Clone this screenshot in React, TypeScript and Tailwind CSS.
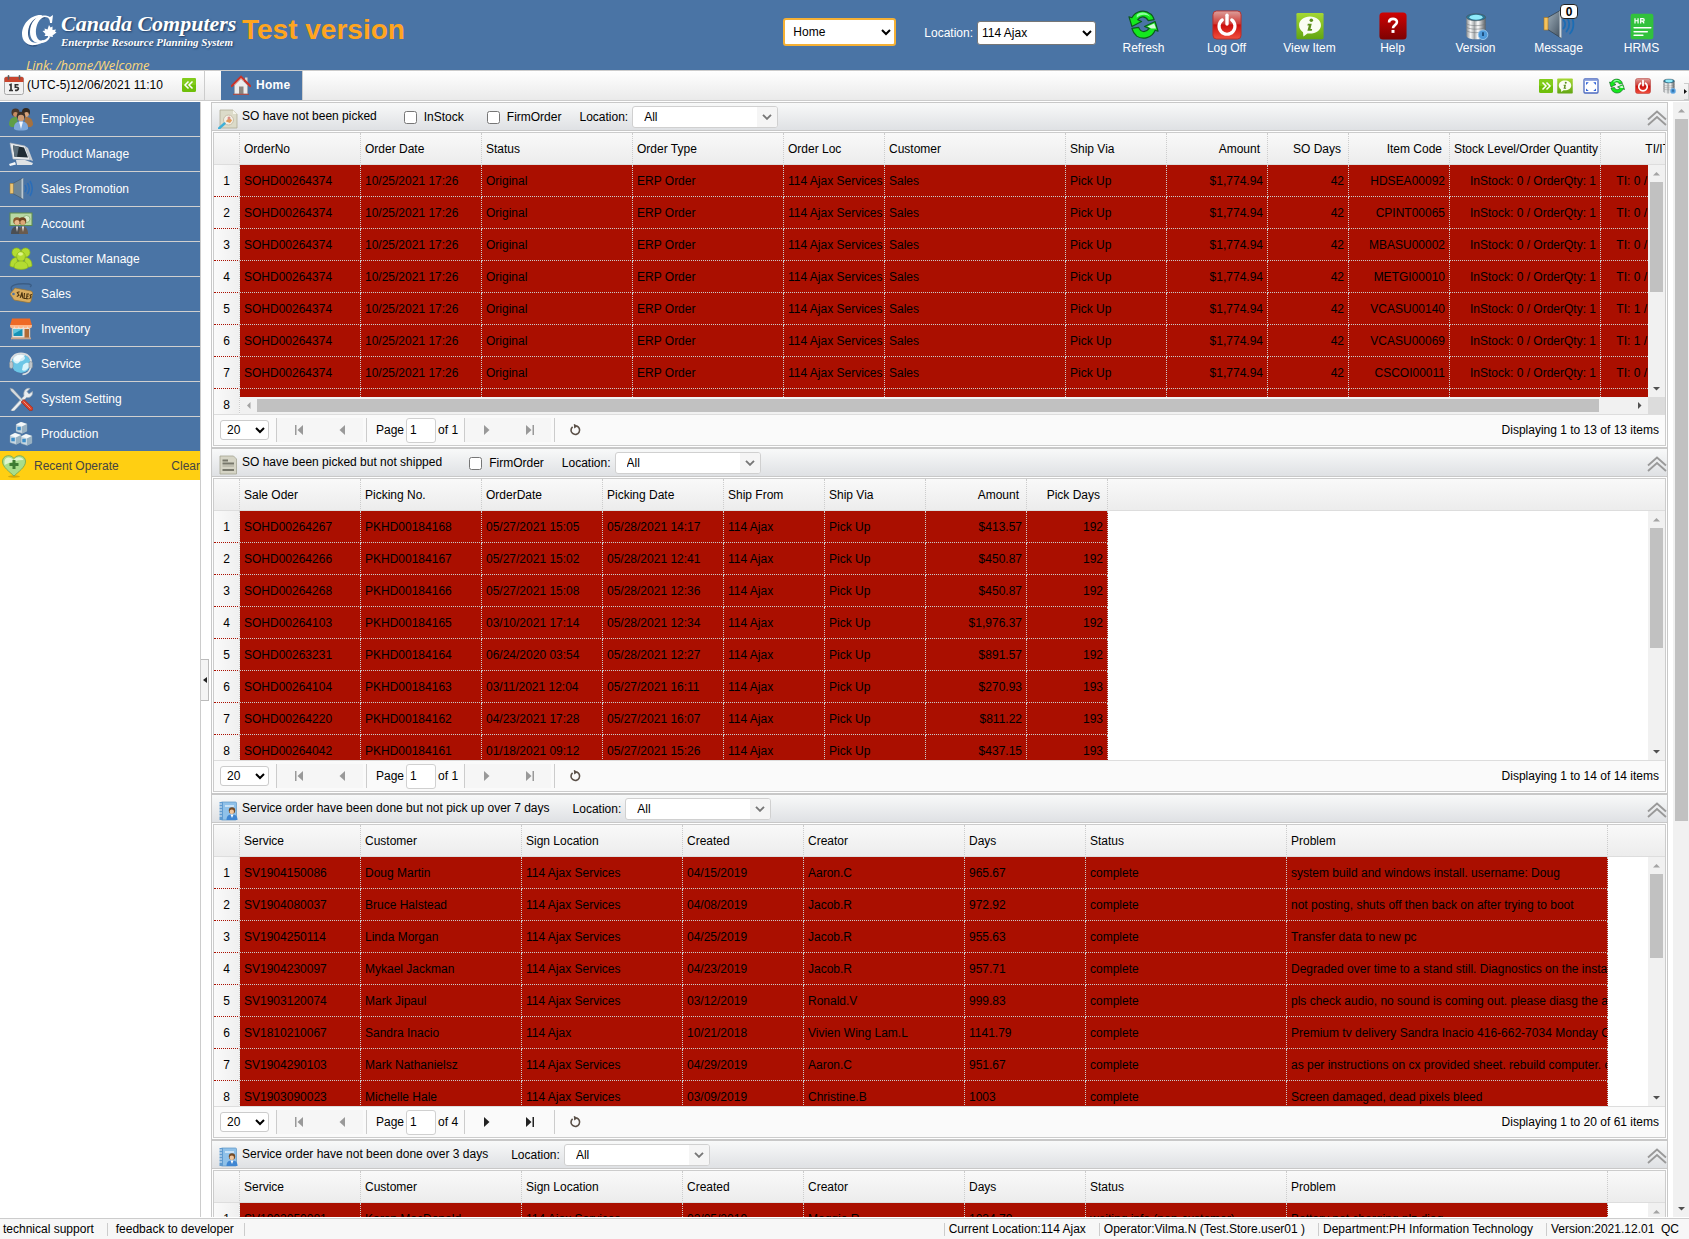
import React, { useId, useState } from "react";

type Column = { label: string; width: number; right?: boolean };
type PanelData = {
  title: string;
  icon: React.ReactNode;
  checks: string[];
  columns: Column[];
  rows: string[][];
  pages: number;
  total: string;
  thumb: number;
  wide?: boolean;
};

/* ---------- small glyph icons ---------- */

function RefreshIcon({ className }: { className: string }) {
  return (
    <svg viewBox="0 0 32 32" className={className} aria-hidden="true">
      <g stroke="#0b5a1c" strokeWidth="1.2" strokeLinejoin="round">
        <path d="M1 8 L4 9 C8 2 17 0 23 5 C25 6 26 8 27 11 L21 12 C18 7 13 7 10 11 L14 13 L4 18 Z" fill="#14e81e" />
        <path d="M31 23 L28 22 C25 30 15 32 9 28 C7 26 5 24 4 20 L11 19 C13 24 18 25 22 20 L17 18 L28 13 Z" fill="#14e81e" />
      </g>
      <path d="M9 6 C13 2 20 3 23 8 C19 5 13 5 9 9 Z" fill="#8dffa0" />
      <path d="M20 18 L27 15 L29 20 L24 20 Z" fill="#e6ffe9" opacity=".9" />
    </svg>
  );
}

function PowerIcon({ className }: { className: string }) {
  const id = useId();
  return (
    <svg viewBox="0 0 32 32" className={className} aria-hidden="true">
      <defs>
        <linearGradient id={id} x1="0" y1="0" x2="0" y2="1">
          <stop offset="0" stopColor="#dda09c" />
          <stop offset=".45" stopColor="#cf3b36" />
          <stop offset=".5" stopColor="#cc0d0b" />
          <stop offset="1" stopColor="#f0503e" />
        </linearGradient>
      </defs>
      <rect x="1" y="1" width="30" height="30" rx="4" fill={`url(#${id})`} stroke="#b3302c" />
      <path d="M11 10.5 A8.5 8.5 0 1 0 21 10.5" fill="none" stroke="#fff" strokeWidth="3.4" strokeLinecap="round" />
      <path d="M16 5.5 V15" stroke="#fff" strokeWidth="3.6" strokeLinecap="round" />
    </svg>
  );
}

function InfoIcon({ className }: { className: string }) {
  const id = useId();
  return (
    <svg viewBox="0 0 32 32" className={className} aria-hidden="true">
      <defs>
        <linearGradient id={id} x1="0" y1="0" x2="0" y2="1">
          <stop offset="0" stopColor="#a5d833" />
          <stop offset="1" stopColor="#62a512" />
        </linearGradient>
      </defs>
      <rect x=".5" y="1" width="31" height="30" rx="1.5" fill={`url(#${id})`} />
      <path d="M16 5 C9 5 3.5 9 3.5 15 C3.5 19 6 21.500 8 23 L8.500 28 L13 24.500 C22 25.500 28.500 21 28.500 15 C28.500 9 23 5 16 5 Z" fill="#fafdf2" />
      <circle cx="17.500" cy="9.500" r="2" fill="#5c8f1c" />
      <path d="M13.500 13.500 H18 L16.500 19.500 H18.500 L18 21.500 H13 L14.700 15.500 H13 Z" fill="#5c8f1c" />
    </svg>
  );
}

function HelpIcon({ className }: { className: string }) {
  const id = useId();
  return (
    <svg viewBox="0 0 32 32" className={className} aria-hidden="true">
      <defs>
        <linearGradient id={id} x1="0" y1="0" x2="0" y2="1">
          <stop offset="0" stopColor="#cf0303" />
          <stop offset="1" stopColor="#7c0202" />
        </linearGradient>
      </defs>
      <rect x=".5" y=".5" width="31" height="31" rx="4" fill={`url(#${id})`} />
      <path d="M11.500 12 C11.500 6.500 20.500 6.500 20.500 11.500 C20.500 15 16 15 16 18.500" fill="none" stroke="#fff" strokeWidth="3" />
      <rect x="14.300" y="20.500" width="3.400" height="3.400" fill="#fff" />
    </svg>
  );
}

function DatabaseIcon({ className }: { className: string }) {
  const id = useId();
  return (
    <svg viewBox="0 0 32 32" className={className} aria-hidden="true">
      <defs>
        <linearGradient id={id} x1="0" y1="0" x2="1" y2="0">
          <stop offset="0" stopColor="#85898c" />
          <stop offset=".22" stopColor="#f8f9f9" />
          <stop offset=".42" stopColor="#a3a7a9" />
          <stop offset=".6" stopColor="#ffffff" />
          <stop offset=".85" stopColor="#909497" />
          <stop offset="1" stopColor="#5d6164" />
        </linearGradient>
      </defs>
      <path d="M5 6 V27 C5 32.500 27 32.500 27 27 V6 Z" fill={`url(#${id})`} />
      <path d="M5 13 C7 16.500 25 16.500 27 13 M5 17 C7 20.500 25 20.500 27 17 M5 21 C7 24.500 25 24.500 27 21" fill="none" stroke="#6f7376" strokeWidth=".6" />
      <ellipse cx="16" cy="6" rx="11" ry="4" fill="#2c7695" stroke="#4b545a" strokeWidth=".7" />
      <ellipse cx="16" cy="6" rx="7.500" ry="2.800" fill="#8feafa" />
      <circle cx="24" cy="26" r="5.500" fill="#4f9bdb" stroke="#9cc9ee" />
      <path d="M24 23 V27.500" stroke="#123e6b" strokeWidth="1.800" />
    </svg>
  );
}

function SpeakerIcon({ className }: { className: string }) {
  const id = useId();
  return (
    <svg viewBox="0 0 32 32" className={className} aria-hidden="true">
      <defs>
        <linearGradient id={id} x1="0" y1="0" x2="1" y2="1">
          <stop offset="0" stopColor="#a3b2bd" />
          <stop offset="1" stopColor="#3f4f5e" />
        </linearGradient>
      </defs>
      <path d="M4 10 L18 2 V30 L4 21 Z" fill={`url(#${id})`} stroke="#33414d" strokeWidth=".8" />
      <path d="M16.500 3 L18.500 2 V30 L16.500 29 Z" fill="#cfd8de" />
      <rect x="1" y="9.500" width="4" height="12.500" fill="#f6c35d" stroke="#a8741d" strokeWidth=".6" />
      <path d="M20.500 12 C22.500 14.500 22.500 18 20.500 20.500 M23.500 9 C27 13.500 27 19 23.500 23.500 M27 7 C31.500 12 31.500 20.500 27 25.500" fill="none" stroke="#1b6db5" strokeWidth="1.800" strokeLinecap="round" />
    </svg>
  );
}

function HrIcon({ className }: { className: string }) {
  return (
    <svg viewBox="0 0 32 32" className={className} aria-hidden="true">
      <rect x="3" y="2" width="26" height="29" rx="2.500" fill="#31c13c" />
      <path d="M8 7 V13 M11.500 7 V13 M8 10 H11.500 M14.500 13 V7.500 H17 C19 7.500 19 10.500 17 10.500 H15 M16.500 10.500 L18.500 13" fill="none" stroke="#fff" strokeWidth="1.400" />
      <path d="M7 18 H26 M7 22.500 H22 M7 26.500 H17" stroke="#fff" strokeWidth="1.800" strokeLinecap="round" />
    </svg>
  );
}

function DoubleChevron({ flip }: { flip?: boolean }) {
  return (
    <svg viewBox="0 0 14 14" className="size-3.5" aria-hidden="true">
      <rect width="14" height="14" rx="1.500" fill="#6fbf0a" />
      <rect width="14" height="7" rx="1.500" fill="#82cc1c" />
      <path d={flip ? "M3.500 3.500 L7 7 L3.500 10.500 M7.500 3.500 L11 7 L7.500 10.500" : "M6.500 3.500 L3 7 L6.500 10.500 M10.500 3.500 L7 7 L10.500 10.500"} fill="none" stroke="#fff" strokeWidth="1.500" />
    </svg>
  );
}

function ExpandIcon({ className }: { className: string }) {
  return (
    <svg viewBox="0 0 16 16" className={className} aria-hidden="true">
      <rect x="1" y="1" width="14" height="14" rx="1" fill="#fff" stroke="#4c6ac0" strokeWidth="1.300" />
      <path d="M1 2.200 H15" stroke="#8ba1de" strokeWidth="1.400" />
      <path d="M3 7 V4.200 H5.800 Z M13 7 V4.200 H10.200 Z M3 10.500 V13 H5.800 Z M13 10.500 V13 H10.200 Z" fill="#2f62d8" />
    </svg>
  );
}

function CalendarIcon() {
  return (
    <svg viewBox="0 0 20 20" className="size-5" aria-hidden="true">
      <rect x=".5" y="2" width="19" height="17.500" rx="2" fill="#f1f1f1" stroke="#a9a9a9" />
      <path d="M.5 7 V3.500 Q.5 2 2 2 H18 Q19.500 2 19.500 3.500 V7 Z" fill="#c9452d" />
      <path d="M4.500 .8 V4 M15.500 .8 V4" stroke="#5b5b5b" strokeWidth="1.600" strokeLinecap="round" />
      <path d="M5.300 10 L7 9.500 V15.500 M5 15.500 H9" fill="none" stroke="#333" strokeWidth="1.700" />
      <path d="M14.500 9.800 H11.300 V12.300 C15.500 11.500 15.500 15.800 11 15.300" fill="none" stroke="#333" strokeWidth="1.600" />
    </svg>
  );
}

function HouseIcon() {
  return (
    <svg viewBox="0 0 20 20" className="size-5" aria-hidden="true">
      <rect x="14" y="2.500" width="2.500" height="5" fill="#d9d4d0" />
      <path d="M3.500 10 L10 3.500 L16.500 10 V19 H3.500 Z" fill="#ececec" stroke="#a7a7a7" strokeWidth=".7" />
      <path d="M.8 11 L10 1.800 L19.200 11" fill="none" stroke="#c9332a" strokeWidth="2.200" strokeLinecap="round" />
      <path d="M3 10 L10 3.200 L13 6" fill="none" stroke="#f08a80" strokeWidth=".8" />
      <rect x="8" y="11.500" width="4.500" height="7.500" fill="#8b8580" />
      <path d="M2 19.300 H18" stroke="#b84236" strokeWidth="1" />
    </svg>
  );
}

function BrandMark() {
  return (
    <svg viewBox="0 0 36 34" className="h-[34px] w-9" aria-hidden="true">
      <g transform="translate(1 1.500)" fill="#1d3a66" opacity=".55">
        <path d="M22 1 C10 -1 0 9 0 20 C0 28 6 32 13 31 L16 29 C9 29 6 25 6 19 C6 10 13 3 22 3 Z" />
      </g>
      <path d="M20 1 C9 0 0 10 0 20 C0 28 6 32 13 31 C17 30.500 20 29 22 27 L21 26 C17 29 13 29.500 10 28 C3 24 5 4 19 3 Z" fill="#fff" />
      <path d="M31 1 L28 3 C17 -2 8 7 8 18 C8 27 14 30 20 29 C24 28.500 27 26 28 23 L27 22 C24 26 20 27.500 17 26 C11 22 14 4 23 3 C27 3 28 6 28 9 L30 9 Z" fill="#fff" />
      <path d="M27 11 L28.500 13.500 L30.500 12.500 L30.500 16 L34 15.500 L33 17.500 L34.500 18.500 L30.500 21.500 L31 23 L27 22.500 L26.500 25 L26 22 L22.500 22 L23.500 20 L20.500 17 L23 16.500 L22.500 14.500 L25.500 15.500 Z" fill="#fff" />
    </svg>
  );
}

/* ---------- side menu icons ---------- */

const menuIcons: Record<string, React.ReactNode> = {
  Employee: (
    <>
      <circle cx="6.500" cy="5.500" r="4" fill="#4a372b" /><circle cx="17" cy="5" r="4" fill="#33281f" />
      <path d="M0 18 C0 11 4 9.500 8 10 L9 20 H2 Z" fill="#5f9e48" />
      <path d="M24 18 C24 11 20 9.500 16 10 L15 20 H22 Z" fill="#a5713f" />
      <circle cx="6.500" cy="7.500" r="2.400" fill="#c88e63" /><circle cx="17.500" cy="7.500" r="2.400" fill="#d8a47b" />
      <circle cx="12" cy="9" r="4.300" fill="#3a3029" /><circle cx="12" cy="11" r="3.200" fill="#cf9b73" />
      <path d="M5 22 C4.500 16 8 14.500 12 14.500 C16 14.500 19.500 16 19 22 C17 24 7 24 5 22 Z" fill="#7ea8db" />
      <path d="M10 14.500 L12 22 L14 14.500 Z" fill="#f2f6fb" />
    </>
  ),
  "Product Manage": (
    <>
      <path d="M1 1 L16 4 L21 18 L4 17 Z" fill="#e7eaec" stroke="#b3b9bd" strokeWidth=".6" />
      <path d="M4 3.500 L15 5.500 L19 15.500 L5.500 14.800 Z" fill="#1f2b33" />
      <path d="M4 3.500 L10 4.600 L8 15 L5.500 14.800 Z" fill="#5c6e7a" />
      <path d="M16 4 L19 6 L24 19 L21 18 Z" fill="#c8cdd1" />
      <path d="M7 18 L16 18 L24 21 L23 23 H8 Z" fill="#dfe3e6" />
      <path d="M0 22 L6 20 L7 22.500 L1 24 Z" fill="#f4f6f7" />
    </>
  ),
  "Sales Promotion": (
    <>
      <path d="M3 7 L14 1 V22 L3 16 Z" fill="#6e8596" stroke="#3c4d5a" strokeWidth=".5" />
      <path d="M12.500 2 L14.300 1 V22 L12.500 21 Z" fill="#b9c7d1" />
      <rect x="1" y="6.500" width="3.200" height="10" fill="#edc675" stroke="#a17a33" strokeWidth=".5" />
      <path d="M16 8 Q18 11.500 16 15 M18.500 6 Q22 11.500 18.500 17 M21 4 Q25.500 11.500 21 19" fill="none" stroke="#2a6db8" strokeWidth="1.500" />
    </>
  ),
  Account: (
    <>
      <rect x="1" y="1" width="22" height="12.500" fill="#b8d8a3" stroke="#5e8c4d" />
      <circle cx="17.500" cy="7" r="3.500" fill="#dbecc9" stroke="#7ba868" strokeWidth=".7" />
      <circle cx="8" cy="9" r="3.800" fill="#8b5a2c" /><circle cx="13.500" cy="9" r="3.800" fill="#6d4420" />
      <circle cx="8" cy="10.500" r="2.500" fill="#e6b98c" /><circle cx="13.800" cy="10.500" r="2.500" fill="#dba877" />
      <path d="M2 22 C2 16 5 14.500 8 14.500 C11 14.500 12 16 12 22 Z" fill="#4b4f54" />
      <path d="M10 22 C10 16 12 14.500 14 14.500 C17 14.500 19 17 19 22 Z" fill="#6a5b4e" />
      <path d="M7 14.500 L8 20 L9 14.500 Z M13 14.500 L14 20 L15 14.500 Z" fill="#f3f3f3" />
    </>
  ),
  "Customer Manage": (
    <>
      <g fill="#b4dc32" stroke="#8bb51b" strokeWidth=".7">
        <circle cx="7.500" cy="5.500" r="4.500" /><circle cx="16.500" cy="5.500" r="4.500" />
        <path d="M1 19 C1 13 4 10.500 8 10.500 L9 20 H3 Z" /><path d="M23 19 C23 13 20 10.500 16 10.500 L15 20 H21 Z" />
        <ellipse cx="12" cy="9.500" rx="4.300" ry="5" />
        <path d="M5 20.500 C5 16 8 14 12 14 C16 14 19 16 19 20.500 C17 23 7 23 5 20.500 Z" />
      </g>
      <ellipse cx="11.500" cy="7" rx="2.500" ry="1.800" fill="#dff48a" />
    </>
  ),
  Sales: (
    <>
      <path d="M3 9 C-1 3 8 1 20 2 Q24 3 21 5" fill="none" stroke="#3b5d85" strokeWidth="1.300" />
      <path d="M1 12 L6 6 L22 9 Q24 9.500 23.500 12 L22 19 Q21.500 21 19 20.500 L5 18 Z" fill="#d9ac5e" stroke="#9a7431" strokeWidth=".7" />
      <circle cx="4.500" cy="12" r="1.300" fill="#4a74a5" />
      <path d="M10.500 9.800 L8.300 10.500 L10 13.300 L7.800 14.500 M11.200 15.800 L13 10.300 L13.800 16.200 M11.700 14 H13.800 M15.500 11 L15 16.500 H17 M20 12 H18 L17.600 16.800 H19.600 M17.800 14.300 H19.500 M23 12.500 L21 13 L22 15 L20.500 16.800" fill="none" stroke="#4b3410" strokeWidth="1.100" />
    </>
  ),
  Inventory: (
    <>
      <rect x="3" y="8" width="18" height="13" fill="#e9e2db" stroke="#a89b90" strokeWidth=".7" />
      <path d="M3 1.500 H21 L23 8.500 H1 Z" fill="#ee6a26" />
      <path d="M1 8 H23 V9 A2.200 2.200 0 0 1 18.600 9 A2.200 2.200 0 0 1 14.200 9 A2.200 2.200 0 0 1 9.800 9 A2.200 2.200 0 0 1 5.400 9 A2.200 2.200 0 0 1 1 9 Z" fill="#ffb98a" />
      <rect x="4.500" y="12" width="9" height="7" fill="#1592b6" /><path d="M4.500 12 H13.500 L4.500 17 Z" fill="#5fc6de" />
      <rect x="15.500" y="12" width="4.500" height="9" fill="#b06a34" />
      <rect x="2" y="20.500" width="20" height="1.800" fill="#c9a58a" />
    </>
  ),
  Service: (
    <>
      <circle cx="12" cy="11.500" r="9.500" fill="#6cc6e6" />
      <path d="M4 8 C6 3 12 1 16 3 C14 6 11 6 11 9 C9 13 5 12 4 8 Z M14 13 C18 9 21 11 21 13 C19 18 15 20 13 18 Z" fill="#d9f4fb" />
      <ellipse cx="10" cy="6" rx="6" ry="3.500" fill="#fff" opacity=".7" />
      <path d="M2 12 C0 -2 24 -2 22 12" fill="none" stroke="#d8dbdd" strokeWidth="2" />
      <rect x=".5" y="9.500" width="3.500" height="7" rx="1.700" fill="#bfc5c9" stroke="#7b858c" strokeWidth=".5" />
      <rect x="20" y="9.500" width="3.500" height="7" rx="1.700" fill="#bfc5c9" stroke="#7b858c" strokeWidth=".5" />
      <path d="M21.500 16 Q20 22 13.500 22.500" fill="none" stroke="#dcdfe1" strokeWidth="1.600" />
    </>
  ),
  "System Setting": (
    <>
      <path d="M3 22 L15 9 C14 4 17 .5 21 1.500 L18 4.500 L20 7 L23.500 4.500 C24 9 21 11 17.500 10.500 L5.500 23.500 C3 25 1 23.500 3 22 Z" fill="#e9edf0" stroke="#9fa9b1" strokeWidth=".7" />
      <path d="M1 1 L4 2 L14 13 L12.500 14.500 L2 4 Z" fill="#d5dade" stroke="#8e979e" strokeWidth=".5" />
      <path d="M12 15 L15 12.500 L23.500 20.500 C25 23 22.500 24.500 20.500 23.500 Z" fill="#d6412c" stroke="#982a1b" strokeWidth=".6" />
      <path d="M14.500 14.500 L21.500 21.500" stroke="#f29482" strokeWidth="1" />
    </>
  ),
  Production: (
    <>
      {[[7, 0], [1, 11], [12, 12]].map(([x, y]) => (
        <g key={`${x}-${y}`} transform={`translate(${x} ${y})`}>
          <path d="M0 2.500 L5 0 L11 2 V9 L6 11.500 L0 9.500 Z" fill="#c9d8e2" stroke="#7f97a8" strokeWidth=".5" />
          <path d="M0 2.500 L5 0 L11 2 L6 4.500 Z" fill="#f4f8fa" />
          <path d="M6 4.500 L11 2 V9 L6 11.500 Z" fill="#98b1c2" />
          <rect x="1.300" y="4.800" width="3.500" height="3.500" fill="#3d8ec9" />
        </g>
      ))}
    </>
  ),
};

const menuItems = ["Employee", "Product Manage", "Sales Promotion", "Account", "Customer Manage", "Sales", "Inventory", "Service", "System Setting", "Production"];

function HeartIcon() {
  return (
    <svg viewBox="0 0 24 24" className="size-6" aria-hidden="true">
      <ellipse cx="12" cy="22.500" rx="6" ry="1.200" fill="#b98f00" opacity=".6" />
      <path d="M12 22 C8 18 0 13 .5 7 C1 1 9 0 12 4.500 C15 0 23 1 23.500 7 C24 13 16 18 12 22 Z" fill="#a9dd8b" stroke="#6ca356" strokeWidth=".8" />
      <path d="M2.500 7 C3 3 8 2 11.500 6 C15 2 20 3 21.500 6 C15 6 8 8 2.500 11 Z" fill="#dff5cf" />
      <path d="M12 6 V15 M7.500 10.500 H16.500" stroke="#3f7c33" strokeWidth="3" />
    </svg>
  );
}

/* ---------- panel icons ---------- */

const searchDocIcon = (
  <svg viewBox="0 0 20 20" className="size-5" aria-hidden="true">
    <path d="M2 1 H15 L19 5 V19 H2 Z" fill="#dcdbc9" stroke="#aeac98" strokeWidth=".8" />
    <path d="M15 1 V5 H19 Z" fill="#f5f4ea" />
    <circle cx="10.500" cy="11" r="5" fill="#f3efe6" stroke="#c7bfa9" />
    <path d="M8 12.500 C9 9 13 9 14 11.500 L12 14 Z" fill="#e39a5b" />
    <circle cx="11" cy="9" r="1.500" fill="#d98d84" />
    <path d="M6.500 14.500 L1 19.500" stroke="#3fb0d8" strokeWidth="2.400" strokeLinecap="round" />
  </svg>
);
const docIcon = (
  <svg viewBox="0 0 20 20" className="size-5" aria-hidden="true">
    <path d="M2 1 H15.500 L18.500 4 V19 H2 Z" fill="#d5d4c5" stroke="#a5a493" strokeWidth=".8" />
    <path d="M4.500 5.500 H10 M4.500 8.500 H16 M4.500 15 H16" stroke="#77776b" strokeWidth="1.900" />
    <path d="M4.500 11 H16" stroke="#a7a697" strokeWidth="1" />
  </svg>
);
const contactIcon = (
  <svg viewBox="0 0 20 20" className="size-5" aria-hidden="true">
    <rect x="3" y="1" width="15.500" height="18" rx="1" fill="#8fc1e9" stroke="#5d95c4" strokeWidth=".7" />
    <rect x="1.500" y="1" width="3.500" height="18" fill="#5f9bd0" />
    <path d="M.8 3 H4 M.8 6 H4 M.8 9 H4 M.8 12 H4 M.8 15 H4" stroke="#e5eff7" strokeWidth="1.100" />
    <rect x="7" y="4" width="9" height="2" fill="#c9e2f6" />
    <circle cx="14" cy="9.500" r="3.200" fill="#754a24" /><circle cx="13.800" cy="10.800" r="2.200" fill="#f1c69d" />
    <path d="M8.500 19 C8.500 14.500 11 13.500 14 13.500 C17 13.500 19.500 14.500 19.500 19 Z" fill="#3f86d2" />
    <path d="M12.500 13.500 L14 17 L15.500 13.500 Z" fill="#fff" />
  </svg>
);

/* ---------- data ---------- */

const so = (code: string, ti: string) => ["SOHD00264374", "10/25/2021 17:26", "Original", "ERP Order", "114 Ajax Services", "Sales", "Pick Up", "$1,774.94", "42", code, "InStock: 0 / OrderQty: 1", `TI: ${ti} / IT: 0`];
const pick = (order: string, no: string, od: string, pd: string, amount: string, days: string) => [order, no, od, pd, "114 Ajax", "Pick Up", amount, days];

const serviceColumns: Column[] = [
  { label: "Service", width: 121 }, { label: "Customer", width: 161 }, { label: "Sign Location", width: 161 },
  { label: "Created", width: 121 }, { label: "Creator", width: 161 }, { label: "Days", width: 121 },
  { label: "Status", width: 201 }, { label: "Problem", width: 321 },
];

const panels: PanelData[] = [
  {
    title: "SO have not been picked", icon: searchDocIcon, checks: ["InStock", "FirmOrder"], pages: 1,
    total: "Displaying 1 to 13 of 13 items", thumb: 110, wide: true,
    columns: [
      { label: "OrderNo", width: 121 }, { label: "Order Date", width: 121 }, { label: "Status", width: 151 },
      { label: "Order Type", width: 151 }, { label: "Order Loc", width: 101 }, { label: "Customer", width: 181 },
      { label: "Ship Via", width: 101 }, { label: "Amount", width: 101, right: true }, { label: "SO Days", width: 81, right: true },
      { label: "Item Code", width: 101, right: true }, { label: "Stock Level/Order Quantity", width: 151, right: true },
      { label: "TI/IT", width: 77, right: true },
    ],
    rows: [so("HDSEA00092", "0"), so("CPINT00065", "0"), so("MBASU00002", "0"), so("METGI00010", "0"), so("VCASU00140", "1"), so("VCASU00069", "1"), so("CSCOI00011", "0"), so("", "0")],
  },
  {
    title: "SO have been picked but not shipped", icon: docIcon, checks: ["FirmOrder"], pages: 1,
    total: "Displaying 1 to 14 of 14 items", thumb: 120,
    columns: [
      { label: "Sale Oder", width: 121 }, { label: "Picking No.", width: 121 }, { label: "OrderDate", width: 121 },
      { label: "Picking Date", width: 121 }, { label: "Ship From", width: 101 }, { label: "Ship Via", width: 101 },
      { label: "Amount", width: 101, right: true }, { label: "Pick Days", width: 81, right: true },
    ],
    rows: [
      pick("SOHD00264267", "PKHD00184168", "05/27/2021 15:05", "05/28/2021 14:17", "$413.57", "192"),
      pick("SOHD00264266", "PKHD00184167", "05/27/2021 15:02", "05/28/2021 12:41", "$450.87", "192"),
      pick("SOHD00264268", "PKHD00184166", "05/27/2021 15:08", "05/28/2021 12:36", "$450.87", "192"),
      pick("SOHD00264103", "PKHD00184165", "03/10/2021 17:14", "05/28/2021 12:34", "$1,976.37", "192"),
      pick("SOHD00263231", "PKHD00184164", "06/24/2020 03:54", "05/28/2021 12:27", "$891.57", "192"),
      pick("SOHD00264104", "PKHD00184163", "03/11/2021 12:04", "05/27/2021 16:11", "$270.93", "193"),
      pick("SOHD00264220", "PKHD00184162", "04/23/2021 17:28", "05/27/2021 16:07", "$811.22", "193"),
      pick("SOHD00264042", "PKHD00184161", "01/18/2021 09:12", "05/27/2021 15:26", "$437.15", "193"),
    ],
  },
  {
    title: "Service order have been done but not pick up over 7 days", icon: contactIcon, checks: [], pages: 4,
    total: "Displaying 1 to 20 of 61 items", thumb: 84, columns: serviceColumns,
    rows: [
      ["SV1904150086", "Doug Martin", "114 Ajax Services", "04/15/2019", "Aaron.C", "965.67", "complete", "system build and windows install. username: Doug"],
      ["SV1904080037", "Bruce Halstead", "114 Ajax Services", "04/08/2019", "Jacob.R", "972.92", "complete", "not posting, shuts off then back on after trying to boot"],
      ["SV1904250114", "Linda Morgan", "114 Ajax Services", "04/25/2019", "Jacob.R", "955.63", "complete", "Transfer data to new pc"],
      ["SV1904230097", "Mykael Jackman", "114 Ajax Services", "04/23/2019", "Jacob.R", "957.71", "complete", "Degraded over time to a stand still. Diagnostics on the installed"],
      ["SV1903120074", "Mark Jipaul", "114 Ajax Services", "03/12/2019", "Ronald.V", "999.83", "complete", "pls check audio, no sound is coming out. please diasg the audio"],
      ["SV1810210067", "Sandra Inacio", "114 Ajax", "10/21/2018", "Vivien Wing Lam.L", "1141.79", "complete", "Premium tv delivery Sandra Inacio 416-662-7034 Monday Oct"],
      ["SV1904290103", "Mark Nathanielsz", "114 Ajax Services", "04/29/2019", "Aaron.C", "951.67", "complete", "as per instructions on cx provided sheet. rebuild computer. cx"],
      ["SV1903090023", "Michelle Hale", "114 Ajax Services", "03/09/2019", "Christine.B", "1003", "complete", "Screen damaged, dead pixels bleed"],
    ],
  },
  {
    title: "Service order have not been done over 3 days", icon: contactIcon, checks: [], pages: 4,
    total: "Displaying 1 to 20 of 61 items", thumb: 84, columns: serviceColumns,
    rows: [["SV1902050081", "Karen MacDonald", "114 Ajax Services", "02/05/2019", "Maggie.R", "1034.79", "waiting info (non-customer)", "Battery not charging plz diag"]],
  },
];

/* ---------- building blocks ---------- */

function Arrow({ dir, dim }: { dir: "up" | "down" | "left" | "right"; dim?: boolean }) {
  const paths = { up: "M0 5.500 L3.500 2 L7 5.500 Z", down: "M0 2 H7 L3.500 5.500 Z", left: "M5.500 0 V7 L2 3.500 Z", right: "M2 0 V7 L5.500 3.500 Z" };
  return (
    <svg viewBox="0 0 7 7" className="size-[7px]" aria-hidden="true">
      <path d={paths[dir]} fill={dim ? "#a3a3a3" : "#505050"} />
    </svg>
  );
}

function VerticalBar({ children }: { children: React.ReactNode }) {
  return (
    <>
      <div className="flex h-[17px] shrink-0 items-center justify-center"><Arrow dir="up" dim /></div>
      {children}
      <div className="mt-auto flex h-[17px] shrink-0 items-center justify-center"><Arrow dir="down" /></div>
    </>
  );
}

function LocationSelect({ id }: { id: string }) {
  return (
    <div className="relative h-[22px] w-[146px] overflow-hidden rounded-[3px] border border-[#d0d0d0] bg-white">
      <select id={id} className="h-full w-full appearance-none pl-[11px] text-xs text-black outline-none">
        <option>All</option>
      </select>
      <span className="pointer-events-none absolute inset-y-0 right-0 flex w-5 items-center justify-center bg-[#f5f5f5]">
        <svg viewBox="0 0 10 6" className="h-1.5 w-2.5" aria-hidden="true">
          <path d="M1 .8 L5 4.800 L9 .8" fill="none" stroke="#777" strokeWidth="1.900" />
        </svg>
      </span>
    </div>
  );
}

function PageButton({ label, path, active }: { label: string; path: string; active?: boolean }) {
  return (
    <button type="button" aria-label={label} className={active ? "flex h-6 w-[43px] items-center justify-center text-[#222]" : "flex h-6 w-[43px] items-center justify-center bg-[#f6f6f6] text-[#999]"}>
      <svg viewBox="0 0 10 12" className="h-3 w-2.5" aria-hidden="true"><path d={path} fill="currentColor" /></svg>
    </button>
  );
}

function Pager({ pages, total }: { pages: number; total: string }) {
  const more = pages > 1;
  const divider = <span className="h-6 w-px bg-[#ccc]" />;
  return (
    <div className="flex h-[31px] items-center border-t border-[#ddd] bg-[#fafafa] pr-1.5 pl-1.5 text-xs">
      <select aria-label="Rows per page" className="mr-[7px] h-5 w-[49px] rounded-[3px] border border-[#ccc] bg-white pl-0.5">
        <option>20</option>
      </select>
      {divider}
      <PageButton label="First page" path="M1 1 H2.500 V11 H1 Z M9 1 V11 L3.500 6 Z" />
      <PageButton label="Previous page" path="M8 1 V11 L2.500 6 Z" />
      <span className="ml-[3px] h-6 w-px bg-[#ccc]" />
      <label className="ml-[9px] flex items-center gap-0.5">
        Page
        <input defaultValue="1" className="h-[25px] w-[30px] rounded-[3px] border border-[#d0d0d0] bg-white px-[3px]" />
      </label>
      <span className="ml-0.5 w-[26px]">of {pages}</span>
      {divider}
      <PageButton label="Next page" path="M2 1 V11 L7.500 6 Z" active={more} />
      <PageButton label="Last page" path="M1 1 V11 L6.500 6 Z M7.500 1 H9 V11 H7.500 Z" active={more} />
      <span className="ml-[3px] h-6 w-px bg-[#ccc]" />
      <button type="button" aria-label="Reload" className="flex h-6 w-10 items-center justify-center">
        <svg viewBox="0 0 12 12" className="size-3" aria-hidden="true">
          <path d="M7.500 2 A4.300 4.300 0 1 1 3.600 2.800" fill="none" stroke="#5a5048" strokeWidth="1.600" />
          <path d="M4.800 -.2 L9 2 L5.200 4.600 Z" fill="#5a5048" />
        </svg>
      </button>
      <span className="ml-auto">{total}</span>
    </div>
  );
}

function Panel({ data }: { data: PanelData }) {
  const id = useId();
  const [open, setOpen] = useState(true);
  return (
    <section className="shrink-0 border border-[#c8c8c8] bg-white text-xs text-black">
      <header className="flex h-7 items-center border-b border-[#c8c8c8] bg-gradient-to-b from-[#f8f9f9] to-[#dfe1e4] pl-1.5">
        <span className="mt-1 mr-1">{data.icon}</span>
        <h2 className="-mt-0.5 leading-4">{data.title}</h2>
        <div className={data.checks.length ? "ml-[27px] flex items-center" : "ml-[5px] flex items-center"}>
          {data.checks.map((c) => (
            <label key={c} className="mr-[18px] flex items-center gap-[7px] [&+label]:ml-[5px]">
              <input type="checkbox" className="mt-0.5 size-[13px]" />
              {c}
            </label>
          ))}
        </div>
        <div className={data.checks.length ? "flex items-center gap-1" : "ml-[18px] flex items-center gap-1"}>
          <label htmlFor={id}>Location:</label>
          <LocationSelect id={id} />
        </div>
        <button type="button" aria-label="Collapse panel" onClick={() => setOpen(!open)} className="mt-0.5 ml-auto">
          <svg viewBox="0 0 20 16" className="h-4 w-5" aria-hidden="true">
            <path d="M1 9.500 L10 1.500 L19 9.500 M1 15 L10 7 L19 15" fill="none" stroke="#999" strokeWidth="1.800" />
          </svg>
        </button>
      </header>
      {open && (
        <div className="m-px border border-[#ccc]">
          <div className="relative h-[281px] overflow-hidden">
            <table className="w-full table-fixed border-separate border-spacing-0 whitespace-nowrap">
              <colgroup>
                <col className="w-[26px]" />
                {data.columns.map((c) => <col key={c.label} style={{ width: c.width }} />)}
                <col />
              </colgroup>
              <thead>
                <tr className="h-8 bg-gradient-to-b from-[#f9f9f9] to-[#ececec]">
                  <th className="border-r border-b border-r-[#ccc] border-b-[#ddd] [border-right-style:dotted]" />
                  {data.columns.map((c) => (
                    <th key={c.label} className={`h-8 border-r border-b border-r-[#ccc] border-b-[#ddd] p-0 pl-1 font-normal [border-right-style:dotted] ${c.right ? (c.label.length > 20 ? "pr-0.5 text-right" : "pr-[7px] text-right") : "text-left"}`}>
                      {c.label}
                    </th>
                  ))}
                  <th className="border-b border-[#ddd] p-0" />
                </tr>
              </thead>
              <tbody>
                {data.rows.map((row, i) => (
                  <tr key={i} className="h-8">
                    <td className="h-8 border-r border-b border-dotted border-r-[#ccc] border-b-[#aa0f00] bg-gradient-to-r from-[#fafafa] to-[#efefef] p-0 text-center">{i + 1}</td>
                    {row.map((cell, j) => (
                      <td key={j} className={`h-8 overflow-hidden border-r border-b border-dotted border-[#ccc] bg-[#aa0f00] py-0 pl-1 ${data.columns[j].right ? "pr-1 text-right" : "pr-0 text-left"}`}>
                        {cell}
                      </td>
                    ))}
                    <td className="p-0" />
                  </tr>
                ))}
              </tbody>
            </table>
            <div className={`absolute top-8 right-0 flex w-[17px] flex-col bg-[#f1f1f1] ${data.wide ? "bottom-[17px]" : "bottom-0"}`}>
              <VerticalBar>
                <div className="mx-0.5 bg-[#c1c1c1]" style={{ height: data.thumb }} />
              </VerticalBar>
            </div>
            {data.wide && (
              <div className="absolute right-0 bottom-0 left-[26px] flex h-[17px] bg-[#f1f1f1]">
                <div className="flex w-[17px] items-center justify-center"><Arrow dir="left" dim /></div>
                <div className="my-0.5 flex-1 bg-[#c1c1c1]" />
                <div className="flex w-[49px] items-center justify-end pr-[5px]"><Arrow dir="right" /></div>
                <div className="w-[17px] bg-[#dcdcdc]" />
              </div>
            )}
          </div>
          <Pager pages={data.pages} total={data.total} />
        </div>
      )}
    </section>
  );
}

const actions = [
  { label: "Refresh", icon: <RefreshIcon className="size-[31px]" /> },
  { label: "Log Off", icon: <PowerIcon className="size-[30px]" /> },
  { label: "View Item", icon: <InfoIcon className="size-7" /> },
  { label: "Help", icon: <HelpIcon className="size-7" /> },
  { label: "Version", icon: <DatabaseIcon className="size-7" /> },
  { label: "Message", icon: <SpeakerIcon className="size-8" />, badge: "0" },
  { label: "HRMS", icon: <HrIcon className="size-7" /> },
];

export default function App() {
  return (
    <div className="flex h-screen flex-col overflow-hidden bg-white font-['Liberation_Sans',Arial,sans-serif] text-xs text-black">
      <header className="flex h-[71px] shrink-0 border-b border-[#ccc] bg-[#4a74a5] text-white">
        <div className="h-[70px] overflow-hidden pl-[22px]">
          <div className="flex h-[57px] items-start pt-3.5">
            <BrandMark />
            <div className="ml-[3px] w-[181px] font-['Liberation_Serif',serif] font-bold italic whitespace-nowrap [text-shadow:1px_1px_2px_#1f3c63]">
              <div className="text-[22px] leading-5">Canada Computers</div>
              <div className="text-[11px] leading-4">Enterprise Resource Planning System</div>
            </div>
            <div className="text-[28px] leading-8 font-bold text-[#ffa51e]">Test version</div>
          </div>
          <div className="pl-1 font-['Open_Sans',sans-serif] text-[13px] leading-4 text-[#fbd77c] italic">Link: /home/Welcome</div>
        </div>
        <div className="ml-auto flex pr-1.5">
          <select aria-label="Module" className="mt-[18px] mr-7 h-7 w-[113px] rounded-[3px] border-2 border-[#f5b034] bg-white pl-1 text-xs text-black">
            <option>Home</option>
          </select>
          <label htmlFor="loc" className="mt-[25px] mr-1 leading-4">Location:</label>
          <select id="loc" className="mt-[21px] mr-1.5 h-6 w-[119px] rounded-[3px] border border-[#767676] bg-white text-xs text-black">
            <option>114 Ajax</option>
          </select>
          {actions.map((a) => (
            <button key={a.label} type="button" className="relative flex w-[83px] flex-col items-center pt-2">
              <span className="flex h-8 items-end justify-center">{a.icon}</span>
              <span className="leading-4">{a.label}</span>
              {a.badge && (
                <span className="absolute top-1 left-[43px] flex h-[15px] w-[18px] items-center justify-center rounded-[4px] border border-[#222] bg-white text-xs font-bold text-black">{a.badge}</span>
              )}
            </button>
          ))}
        </div>
      </header>

      <div className="flex h-[30px] shrink-0 border-b border-[#ccc] bg-gradient-to-b from-white to-[#eaeaea]">
        <div className="flex w-[205px] items-center border-r border-[#ccc] pb-0.5 pl-1">
          <CalendarIcon />
          <span className="ml-[3px]">(UTC-5)12/06/2021 11:10</span>
          <button type="button" aria-label="Collapse menu" className="mr-2 ml-auto"><DoubleChevron /></button>
        </div>
        <nav className="ml-4 flex border-r border-[#ccc]">
          <a href="#home" className="flex w-[81px] items-center gap-[5px] bg-[#4a74a5] pb-0.5 pl-2.5 font-bold tracking-wide text-white">
            <HouseIcon />
            Home
          </a>
        </nav>
        <div className="ml-auto flex items-center">
          <button type="button" aria-label="Expand" className="mr-1"><DoubleChevron flip /></button>
          <button type="button" aria-label="View item" className="mr-2.5"><InfoIcon className="size-4" /></button>
          <button type="button" aria-label="Full screen" className="mr-2.5"><ExpandIcon className="size-4" /></button>
          <button type="button" aria-label="Refresh" className="mr-2.5"><RefreshIcon className="size-4" /></button>
          <button type="button" aria-label="Log off" className="mr-2.5"><PowerIcon className="size-4" /></button>
          <button type="button" aria-label="Version" className="mr-[7px]"><DatabaseIcon className="size-4" /></button>
          <span className="mt-3 flex h-[17px] w-[5px] items-center overflow-hidden border-y border-r border-[#ccc]"><svg viewBox="0 0 3 5" className="h-[5px] w-[3px]" aria-hidden="true"><path d="M0 0 V5 L3 2.500 Z" fill="#111" /></svg></span>
        </div>
      </div>

      <div className="flex min-h-0 flex-1 pt-px">
        <aside className="w-[201px] shrink-0 border-r border-[#ccc]">
          <nav>
            {menuItems.map((m) => (
              <a key={m} href="#menu" className="flex h-[35px] items-center gap-2 border-b border-[#d0d0d0] bg-[#4a74a5] pl-[9px] text-white last:h-[34px] last:border-b-0">
                <svg viewBox="0 0 24 24" className="size-6" aria-hidden="true">{menuIcons[m]}</svg>
                {m}
              </a>
            ))}
          </nav>
          <div className="flex h-[29px] items-center overflow-hidden bg-[#ffcf12] pl-0.5 whitespace-nowrap text-[#444]">
            <HeartIcon />
            <span className="ml-2">Recent Operate</span>
            <button type="button" className="ml-auto">Clear</button>
          </div>
        </aside>
        <div className="flex w-2.5 shrink-0 items-center">
          <button type="button" aria-label="Toggle side menu" className="mt-10 flex h-[42px] w-2 items-center justify-center border border-l-0 border-[#bbb] bg-[#f4f4f4]">
            <svg viewBox="0 0 4 6" className="h-1.5 w-1" aria-hidden="true"><path d="M4 0 V6 L0 3 Z" fill="#222" /></svg>
          </button>
        </div>
        <main className="flex min-w-0 flex-1 flex-col overflow-hidden">
          {panels.map((p) => <Panel key={p.title} data={p} />)}
        </main>
        <div className="ml-[5px] flex w-4 shrink-0 flex-col bg-[#f1f1f1]">
          <VerticalBar>
            <div className="mr-px ml-0.5 h-[63%] bg-[#c1c1c1]" />
          </VerticalBar>
        </div>
      </div>

      <footer className="mt-px flex h-[21px] shrink-0 items-center border-t border-[#ccc] bg-[#f7f7f7] pl-[3px] whitespace-nowrap">
        <a href="#support" className="border-r border-[#ccc] pr-[13px] leading-[13px]">technical support</a>
        <a href="#feedback" className="border-r border-[#ccc] pr-2.5 pl-2 leading-[13px]">feedback to developer</a>
        <div className="ml-auto flex leading-[13px] *:border-l *:border-[#ccc] *:pl-1">
          <span className="pr-[13px]">Current Location:114 Ajax</span>
          <span className="pr-[13px]">Operator:Vilma.N (Test.Store.user01 )</span>
          <span className="pr-[13px]">Department:PH Information Technology</span>
          <span className="pr-2.5">Version:2021.12.01 &nbsp;QC</span>
        </div>
      </footer>
    </div>
  );
}
